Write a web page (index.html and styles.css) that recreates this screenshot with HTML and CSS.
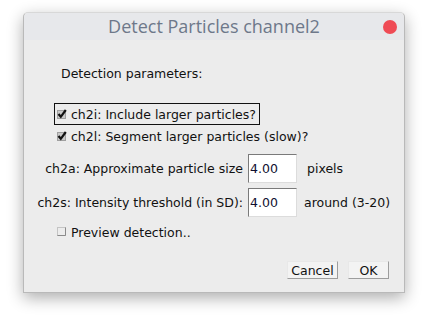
FILE: index.html
```html
<!DOCTYPE html>
<html lang="en">
<head>
    <meta charset="UTF-8">
    <title>Detect Particles channel2</title>
    <link rel="stylesheet" href="styles.css">
</head>
<body>
    <div class="window">
        <div class="titlebar">
            <span></span>
            <span class="title">Detect Particles channel2</span>
            <span class="close-dot"></span>
        </div>

        <div class="content">
            <p class="heading">Detection parameters:</p>

            <label class="check-row focused">
                <svg class="check" width="10" height="10" viewBox="0 0 10 10">
                    <rect x="0.5" y="1.5" width="8" height="8" fill="#c9c9c9" stroke="#a0a0a0"/>
                    <path d="M1.5 5 L3.8 7.8 L8.8 1" fill="none" stroke="#111" stroke-width="2.2"/>
                </svg>
                ch2i: Include larger particles?
            </label>

            <label class="check-row">
                <svg class="check" width="10" height="10" viewBox="0 0 10 10">
                    <rect x="0.5" y="1.5" width="8" height="8" fill="#c9c9c9" stroke="#a0a0a0"/>
                    <path d="M1.5 5 L3.8 7.8 L8.8 1" fill="none" stroke="#111" stroke-width="2.2"/>
                </svg>
                ch2l: Segment larger particles (slow)?
            </label>

            <div class="fields">
                <span class="field-label">ch2a: Approximate particle size</span>
                <span class="field">4.00</span>
                <span class="unit unit-pixels">pixels</span>

                <span class="field-label">ch2s: Intensity threshold (in SD):</span>
                <span class="field">4.00</span>
                <span class="unit">around (3-20)</span>
            </div>

            <label class="check-row preview">
                <svg class="check" width="10" height="10" viewBox="0 0 10 10">
                    <rect x="0.5" y="0.5" width="8" height="8" fill="#ececec" stroke="#c4c4c4"/>
                    <path d="M0.5 8.5 H8.5 V0.5" fill="none" stroke="#8a8a8a"/>
                </svg>
                Preview detection..
            </label>

            <div class="buttons">
                <button class="btn btn-cancel">Cancel</button>
                <button class="btn btn-ok">OK</button>
            </div>
        </div>
    </div>
</body>
</html>
```

FILE: styles.css
```css
* {
    margin: 0;
    padding: 0;
    box-sizing: border-box;
}

body {
    width: 433px;
    height: 315px;
    background: #ffffff;
    font-family: 'DejaVu Sans', sans-serif;
    font-size: 12.5px;
    color: #111;
    overflow: hidden;
}

.window {
    width: 382px;
    height: 281px;
    margin: 12px 0 0 23px;
    background: #ececec;
    border: 1px solid #b9b9b9;
    border-top-color: #d8d8d8;
    border-radius: 5px 5px 0 0;
    box-shadow: 0 5px 16px rgba(0, 0, 0, 0.32);
    display: flex;
    flex-direction: column;
}

/* title bar */
.titlebar {
    height: 27px;
    background: #e7e8eb;
    border-radius: 5px 5px 0 0;
    display: grid;
    grid-template-columns: 1fr auto 1fr;
    align-items: center;
}

.title {
    font-family: 'Open Sans', sans-serif;
    font-size: 18px;
    color: #6e788a;
    line-height: 27px;
}

.close-dot {
    justify-self: end;
    width: 14px;
    height: 14px;
    margin-right: 7px;
    border-radius: 50%;
    background: #ef4b55;
}

/* dialog body */
.content {
    padding-top: 26px;
    display: flex;
    flex-direction: column;
    align-items: flex-start;
}

.heading {
    line-height: 16px;
    padding-left: 37px;
}

.check {
    flex: none;
    margin-right: 4px;
}

.check-row {
    display: flex;
    align-items: center;
    height: 22px;
    margin-left: 30px;
    padding: 0 3px 0 2px;
    border: 1px solid transparent;
}

.check-row.focused {
    margin-top: 21px;
    border-color: #111;
}

.fields {
    display: grid;
    grid-template-columns: 224px 49px auto;
    row-gap: 5px;
    align-items: center;
    margin-top: 7px;
}

.field-label {
    justify-self: end;
    padding-right: 5px;
    white-space: nowrap;
}

.field {
    height: 29px;
    line-height: 27px;
    padding-left: 1px;
    background: #fff;
    border: 1px solid #dcdcdc;
    border-top-color: #7a7a7a;
    border-left-color: #7a7a7a;
    color: #101030;
}

.unit {
    padding-left: 7px;
}

.unit-pixels {
    padding-left: 10px;
}

.check-row.preview {
    height: 20px;
    margin-top: 5px;
}

.buttons {
    align-self: flex-end;
    display: flex;
    gap: 10px;
    margin: 19px 15px 0 0;
}

.btn {
    height: 18px;
    font-family: 'DejaVu Sans', sans-serif;
    font-size: 12.5px;
    color: #111;
    background: #f3f3f3;
    border: 1px solid #9d9d9d;
    border-top-color: #e8e8e8;
    border-left-color: #e8e8e8;
}

.btn-cancel {
    width: 51px;
}

.btn-ok {
    width: 41px;
}
```
